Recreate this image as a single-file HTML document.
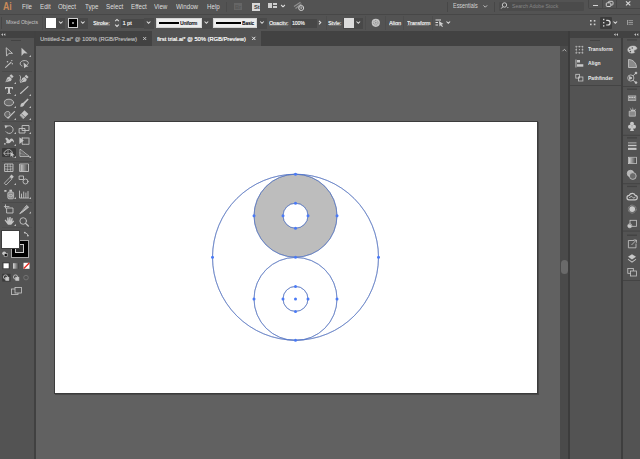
<!DOCTYPE html>
<html><head><meta charset="utf-8">
<style>
*{margin:0;padding:0;box-sizing:border-box}
html,body{width:640px;height:459px;overflow:hidden;background:#535353;font-family:"Liberation Sans",sans-serif;color:#ddd}
.a{position:absolute}
.t{position:absolute;white-space:nowrap;line-height:1;color:#d9d9d9}
.m{font-size:6.9px;top:4px;color:#dedede;transform:scaleX(0.9);transform-origin:0 0}
.c{font-size:5.6px;color:#e6e6e6;text-shadow:0.2px 0 0 #e6e6e6}
svg{position:absolute;overflow:visible}
</style></head><body>
<!-- menu bar -->
<div class="a" style="left:0;top:0;width:640px;height:14px;background:#535353"></div>
<div class="a" style="left:0;top:14px;width:640px;height:1px;background:#474747"></div>
<!-- control bar -->
<div class="a" style="left:0;top:15px;width:640px;height:16px;background:#535353"></div>
<!-- tab row -->
<div class="a" style="left:0;top:31px;width:640px;height:15px;background:#424242"></div>
<!-- toolbar -->
<div class="a" style="left:0;top:38px;width:34px;height:421px;background:#535353"></div>
<div class="a" style="left:34px;top:31px;width:2px;height:428px;background:#414141"></div>
<!-- canvas -->
<div class="a" style="left:36px;top:46px;width:524px;height:413px;background:#616161"></div>
<!-- active tab -->
<div class="a" style="left:152px;top:31px;width:109px;height:15px;background:#535353"></div>
<!-- artboard -->
<div class="a" style="left:54px;top:121px;width:484px;height:273px;background:#3c3c3c;box-shadow:0.5px 0.5px 0.5px #4a4a4a"></div><div class="a" style="left:55px;top:122px;width:482px;height:271px;background:#fff"></div>
<!-- scrollbar -->
<div class="a" style="left:560px;top:46px;width:8px;height:413px;background:#4a4a4a"></div>
<div class="a" style="left:568px;top:31px;width:1.5px;height:428px;background:#3c3c3c"></div>
<!-- right panels -->
<div class="a" style="left:569.5px;top:31px;width:70.5px;height:7px;background:#424242"></div>
<div class="a" style="left:569.5px;top:38px;width:51.5px;height:421px;background:#535353"></div>
<div class="a" style="left:621px;top:38px;width:1.5px;height:421px;background:#3e3e3e"></div>
<div class="a" style="left:623px;top:38px;width:17px;height:421px;background:#535353"></div>
<!-- menu -->
<div class="t" style="left:2.6px;top:0.9px;font-size:10.6px;font-weight:bold;color:#c88a5a;transform:scaleX(0.83);transform-origin:0 0">Ai</div>
<div class="t m" style="left:22.0px">File</div>
<div class="t m" style="left:39.7px">Edit</div>
<div class="t m" style="left:58.2px">Object</div>
<div class="t m" style="left:84.7px">Type</div>
<div class="t m" style="left:106.3px">Select</div>
<div class="t m" style="left:131.2px">Effect</div>
<div class="t m" style="left:154.3px">View</div>
<div class="t m" style="left:176.3px">Window</div>
<div class="t m" style="left:206.7px">Help</div>
<div class="a" style="left:226px;top:2px;width:1px;height:10px;background:#4b4b4b"></div>
<div class="a" style="left:233.7px;top:2.5px;width:8.4px;height:7.8px;background:#656565"></div>
<div class="a" style="left:252px;top:2.6px;width:8px;height:8px;background:#d8d8d8"></div>
<div class="t" style="left:253.5px;top:4.9px;font-size:5.8px;color:#3a3a3a;font-weight:bold;transform:rotate(0.01deg)">St</div><div class="t" style="left:235.2px;top:4.7px;font-size:5.6px;color:#565656;font-weight:bold;transform:rotate(0.01deg)">Br</div>
<div class="a" style="left:268px;top:3px;width:4px;height:5px;background:#cfcfcf"></div>
<div class="a" style="left:273px;top:3px;width:4px;height:2px;background:#cfcfcf"></div>
<div class="a" style="left:273px;top:6px;width:4px;height:2px;background:#cfcfcf"></div>
<svg style="left:0;top:0" width="640" height="15">
<path d="M281.1 5 L283 6.8 L284.9 5" stroke="#dcdcdc" stroke-width="1.1" fill="none"/>
<path d="M294 6.5 L300.5 2.2 M295.5 8.5 L301.5 3.8" stroke="#8e8e8e" stroke-width="1.3" fill="none"/>
<circle cx="301.2" cy="8" r="2.5" stroke="#cfcfcf" stroke-width="1" fill="#535353"/>
<path d="M301.2 6.3 V8.3 M300.2 7.6 L301.2 8.6 L302.2 7.6" stroke="#cfcfcf" stroke-width="0.8" fill="none"/>

</svg>
<div class="a" style="left:447px;top:2px;width:1px;height:10px;background:#474747"></div>
<div class="t m" style="left:453.4px;font-size:6.8px;top:3.2px;color:#d2d2d2;transform:scaleX(0.8);transform-origin:0 0">Essentials</div>
<svg style="left:0;top:0" width="640" height="15">
<path d="M483.5 5.4 L485.3 7.2 L487.1 5.4" stroke="#cfcfcf" stroke-width="0.9" fill="none"/>
</svg>
<div class="a" style="left:494px;top:2px;width:1px;height:10px;background:#474747"></div>
<div class="a" style="left:499px;top:1.5px;width:85px;height:9.5px;background:#4b4b4b;border-radius:1px"></div>
<svg style="left:0;top:0" width="640" height="15">
<circle cx="504.5" cy="5" r="2.2" stroke="#cfcfcf" stroke-width="0.9" fill="none"/>
<path d="M503 6.6 L501.2 8.6" stroke="#cfcfcf" stroke-width="1"/>
<path d="M506.8 7.2 L507.8 8.2 L508.8 7.2 Z" fill="#cfcfcf"/>
</svg>
<div class="t" style="left:511.8px;top:3.2px;font-size:6px;color:#858585;transform:scaleX(0.85);transform-origin:0 0">Search Adobe Stock</div>
<div class="a" style="left:588px;top:-2px;width:60px;height:10.5px;border:1px solid #474747;border-radius:1.5px"></div>
<div class="a" style="left:602px;top:0;width:1px;height:8px;background:#474747"></div>
<div class="a" style="left:616px;top:0;width:1px;height:8px;background:#474747"></div>
<div class="a" style="left:592.6px;top:4.6px;width:5.2px;height:1.3px;background:#d4d4d4"></div>
<svg style="left:0;top:0" width="640" height="15">
<rect x="608.5" y="1.3" width="4.5" height="3.7" rx="0.8" stroke="#d0d0d0" stroke-width="1" fill="none"/>
<rect x="606.3" y="2.8" width="4.5" height="3.7" rx="0.8" stroke="#d0d0d0" stroke-width="1" fill="#535353"/>
<path d="M626 1.4 L630.3 5.4 M630.3 1.4 L626 5.4" stroke="#d8d8d8" stroke-width="1.2"/>
</svg>
<!-- control bar -->
<div class="a" style="left:1px;top:17px;width:1px;height:12px;background:#474747"></div>
<div class="t c" style="left:5.6px;top:20.3px;font-size:5.5px;color:#c6c6c6;text-shadow:none;transform:scaleX(0.92);transform-origin:0 0">Mixed Objects</div>
<div class="a" style="left:42px;top:16px;width:1px;height:14px;background:#4d4d4d"></div>
<div class="a" style="left:45px;top:17.5px;width:20px;height:11px;background:#484848"></div>
<div class="a" style="left:46px;top:18px;width:10px;height:10px;background:#fff"></div>
<div class="a" style="left:67.5px;top:17.5px;width:20px;height:11px;background:#484848"></div>
<div class="a" style="left:68px;top:18px;width:10px;height:10px;background:#000;border:1px solid #cfcfcf"></div>
<div class="a" style="left:71px;top:21px;width:4px;height:4px;background:#8a8a8a;border:1px solid #000"></div>
<div class="t c" style="left:93.2px;top:20.7px;font-size:5.5px;transform:scaleX(0.96);transform-origin:0 0">Stroke:</div><div class="a" style="left:93.5px;top:25.4px;width:16px;height:0.5px;background:#6c6c6c"></div>
<div class="a" style="left:120.5px;top:18.5px;width:23px;height:9px;background:#474747"></div>
<div class="a" style="left:143.5px;top:17.5px;width:10px;height:11px;background:#4a4a4a"></div>
<div class="t c" style="left:122.5px;top:20.6px;font-size:5.5px">1 pt</div>
<div class="a" style="left:156px;top:17.5px;width:45.5px;height:10.5px;background:#ececec;border:1px solid #d4d4d4"></div>
<div class="a" style="left:159px;top:22px;width:20px;height:1.8px;background:#000"></div>
<div class="t c" style="left:179.8px;top:20.5px;font-size:5.3px;color:#141420;text-shadow:0.25px 0 0 #141420;transform:scaleX(0.92);transform-origin:0 0">Uniform</div>
<div class="a" style="left:201.5px;top:17.5px;width:10px;height:11px;background:#4a4a4a"></div>
<div class="a" style="left:213px;top:17.5px;width:44px;height:10.5px;background:#ececec;border:1px solid #d4d4d4"></div>
<div class="a" style="left:216px;top:21.9px;width:25px;height:2px;background:#000"></div>
<div class="t c" style="left:242.4px;top:20.5px;font-size:5.3px;color:#141420;text-shadow:0.25px 0 0 #141420;transform:scaleX(0.92);transform-origin:0 0">Basic</div>
<div class="a" style="left:257px;top:17.5px;width:10px;height:11px;background:#4a4a4a"></div>
<div class="t c" style="left:269px;top:20.7px;font-size:5.5px;transform:scaleX(0.96);transform-origin:0 0">Opacity:</div><div class="a" style="left:269.3px;top:25.4px;width:19px;height:0.5px;background:#6c6c6c"></div>
<div class="a" style="left:290.5px;top:18.5px;width:26px;height:9px;background:#474747"></div>
<div class="t c" style="left:291.6px;top:20.6px;font-size:5.4px;transform:scaleX(0.92);transform-origin:0 0">100%</div>
<div class="a" style="left:326px;top:16px;width:1px;height:14px;background:#4d4d4d"></div>
<div class="t c" style="left:328.2px;top:20.7px;font-size:5.5px;transform:scaleX(0.96);transform-origin:0 0">Style:</div><div class="a" style="left:328.5px;top:25.4px;width:12.5px;height:0.5px;background:#6c6c6c"></div>
<div class="a" style="left:343px;top:17.5px;width:20px;height:11px;background:#484848"></div>
<div class="a" style="left:344px;top:17.5px;width:10px;height:10.3px;background:#dcdcdc"></div>
<div class="a" style="left:365px;top:16px;width:1px;height:14px;background:#4d4d4d"></div>
<div class="a" style="left:384.5px;top:16px;width:1px;height:14px;background:#4d4d4d"></div>
<div class="t c" style="left:388.8px;top:20.7px;font-size:5.5px;transform:scaleX(0.98);transform-origin:0 0">Align</div><div class="a" style="left:389px;top:25.4px;width:11.5px;height:0.5px;background:#6c6c6c"></div>
<div class="a" style="left:403px;top:16px;width:1px;height:14px;background:#4d4d4d"></div>
<div class="t c" style="left:406.8px;top:20.7px;font-size:5.5px;transform:scaleX(0.94);transform-origin:0 0">Transform</div><div class="a" style="left:407px;top:25.4px;width:22.4px;height:0.5px;background:#6c6c6c"></div>
<div class="a" style="left:432px;top:16px;width:1px;height:14px;background:#4d4d4d"></div>
<div class="a" style="left:600px;top:16.5px;width:12px;height:12px;background:#3c3c3c;border-radius:1px"></div>
<svg style="left:0;top:0" width="640" height="32">
<g stroke="#dedede" stroke-width="1.05" fill="none">
<path d="M59 21.5 L60.8 23.3 L62.6 21.5"/>
<path d="M81 21.5 L82.8 23.3 L84.6 21.5"/>
<path d="M115.2 21.2 L117 19.4 L118.8 21.2 M115.2 24.6 L117 26.4 L118.8 24.6"/>
<path d="M146.8 21.5 L148.6 23.3 L150.4 21.5"/>
<path d="M204.6 21.5 L206.4 23.3 L208.2 21.5"/>
<path d="M260.2 21.5 L262 23.3 L263.8 21.5"/>
<path d="M319 20.8 L320.8 22.6 L319 24.4"/>
<path d="M356.5 21.5 L358.3 23.3 L360.1 21.5"/>
<path d="M446.5 21.5 L448.3 23.3 L450.1 21.5"/>
<path d="M613.5 21.5 L615.3 23.3 L617.1 21.5"/>
<circle cx="375.8" cy="22.8" r="4.1" fill="#c4c4c4" stroke="none"/>
<circle cx="375.8" cy="22.8" r="2.2" stroke="#777" stroke-width="0.7" stroke-dasharray="1 0.7"/>
<circle cx="375.8" cy="22.8" r="0.8" fill="#8a8a8a" stroke="none"/>
<path d="M435.5 20 H441 M435.5 22.5 H438 M435.5 25 H438"/>
<path d="M439 21 L443.5 24 L441.5 24.5 L443 26.5 L442 27 L440.8 25.2 L439.5 26.5 Z" fill="#cfcfcf" stroke="none"/>
<path d="M606.2 20.4 H607.8 A2.3 2.3 0 0 1 607.8 25 H606.2" stroke-width="1.2"/>
</g>
<g fill="#d0d0d0">
<rect x="590" y="20" width="1.6" height="1.6"/><rect x="593.8" y="20" width="1.6" height="1.6"/>
<rect x="590" y="23.6" width="1.6" height="1.6"/><rect x="593.8" y="23.6" width="1.6" height="1.6"/>
<rect x="603" y="18.8" width="1.4" height="1.4"/><rect x="603" y="22" width="1.4" height="1.4"/><rect x="603" y="25.2" width="1.4" height="1.4"/></g><g fill="#9c9c9c"><rect x="627" y="20" width="1" height="5"/><rect x="628.5" y="20.2" width="4.5" height="0.9"/>
<rect x="628.5" y="22" width="4.5" height="0.9"/><rect x="628.5" y="23.8" width="4.5" height="0.9"/>
</g>
</svg>
<!-- tabs -->
<svg style="left:0;top:0" width="640" height="46">
<g fill="#c8c8c8">
<path d="M1.2 34.6 L2.9 33.3 V35.9 Z M3.6 34.6 L5.3 33.3 V35.9 Z"/>
<path d="M613.9 34.6 L615.6 33.3 V35.9 Z M616.3 34.6 L618 33.3 V35.9 Z"/>
<path d="M634.2 34.6 L635.9 33.3 V35.9 Z M636.6 34.6 L638.3 33.3 V35.9 Z"/>
</g>
<g stroke="#cdcdcd" stroke-width="0.9">
<path d="M143.2 37 L146.2 40 M146.2 37 L143.2 40"/>
</g>
<g stroke="#e6e6e6" stroke-width="1">
<path d="M252.2 36.8 L255.4 40 M255.4 36.8 L252.2 40"/>
</g>
</svg>
<div class="a" style="left:11px;top:39.6px;width:10px;height:1.5px;background:#434343"></div>
<div class="t" style="left:39.6px;top:36.9px;font-size:5.9px;color:#b0b0b0;text-shadow:0.15px 0 0 #b0b0b0;transform:scaleX(0.98);transform-origin:0 0">Untitled-2.ai* @ 100% (RGB/Preview)</div>
<div class="t" style="left:156.7px;top:36.9px;font-size:5.9px;color:#f0f0f0;text-shadow:0.2px 0 0 #f0f0f0;transform:scaleX(0.975);transform-origin:0 0">first trial.ai* @ 50% (RGB/Preview)</div>
<!-- toolbar -->
<div class="a" style="left:2px;top:71px;width:30px;height:1px;background:#4a4a4a"></div>
<div class="a" style="left:2px;top:121px;width:30px;height:1px;background:#4a4a4a"></div>
<div class="a" style="left:2px;top:160.5px;width:30px;height:1px;background:#4a4a4a"></div>
<div class="a" style="left:2px;top:201.5px;width:30px;height:1px;background:#4a4a4a"></div>
<div class="a" style="left:2px;top:227px;width:30px;height:1px;background:#4e4e4e"></div>
<div class="a" style="left:2px;top:148px;width:14px;height:9px;background:#3a3a3a;border-radius:1px"></div>
<svg style="left:0;top:0" width="36" height="300">
<g fill="#bdbdbd">
<!-- corner triangles -->
<path d="M29 57 L31 55 V57 Z M14 84 L16 82 V84 Z M14 96 L16 94 V96 Z M29 96 L31 94 V96 Z M14 108 L16 106 V108 Z M29 108 L31 106 V108 Z M14 120 L16 118 V120 Z M29 120 L31 118 V120 Z M14 134 L16 132 V134 Z M29 134 L31 132 V134 Z M14 146 L16 144 V146 Z M14 158 L16 156 V158 Z M29 158 L31 156 V158 Z M14 185 L16 183 V185 Z M14 199 L16 197 V199 Z M29 199 L31 197 V199 Z M29 213.5 L31 211.5 V213.5 Z M14 226 L16 224 V226 Z"/>
</g>
<g fill="none" stroke="#c4c4c4" stroke-width="0.9" stroke-linejoin="round" stroke-linecap="round">
<!-- selection outline -->
<path d="M6.5 48 L12.5 53.4 L9 53.3 L6.8 55.8 Z"/>
<!-- wand -->
<path d="M5.6 67.3 L11 62.4" stroke-width="1.1"/>
<!-- lasso -->
<path d="M22 66 C19 65 19.5 61 24 60.6 C28.5 60.3 29.5 63.6 27 65"/>
<!-- curvature line -->
<path d="M20 75.5 C22 77 19 80 20.5 82.5"/>
<!-- line -->
<path d="M20.5 93.5 L28 86.6" stroke-width="1.1"/>
<!-- ellipse -->
<ellipse cx="9" cy="102.5" rx="4.6" ry="3.3" fill="#6a6a6a"/>
<!-- shaper -->
<path d="M9 117.8 C4 118 3 112 7.5 111.5 C9.5 111.3 10.5 113 9.8 114.5" fill="#686868"/>
<path d="M8 118 L14.5 111.6" stroke-width="1.3"/>
<!-- rotate -->
<path d="M6.4 126.9 A3.9 3.9 0 1 1 6 131.8"/>
<!-- scale -->
<rect x="19.5" y="128.5" width="5.5" height="4.5"/>
<rect x="22.5" y="125.5" width="6.5" height="5"/>
<!-- free transform -->
<rect x="22.2" y="138" width="6.8" height="6.3" stroke-dasharray="1 0.7"/>
<!-- shape builder -->
<path d="M6.3 155.5 C3.3 155.5 3.3 151.2 6 151 C6.5 149 10.5 148.8 11 151 C13 151.3 12.8 154.5 11 155" stroke-width="0.8"/>
<path d="M4 153.4 H10.5 M8 150.5 V155.5" stroke-width="0.6"/>
<!-- perspective -->
<path d="M20 149.5 L20 156.5 L29 156.5 Z M20 153 L24.5 154.8"/>
<!-- mesh -->
<rect x="5" y="164" width="8" height="7.5"/>
<!-- gradient -->
<rect x="20" y="164" width="8.5" height="7.5"/>
<!-- blend -->
<rect x="19.5" y="176" width="4" height="3.5"/>
<circle cx="25.5" cy="181.5" r="2.5"/>
<!-- graph -->
<path d="M19.5 191 V198 H28.5 M21.5 197.5 V194 M23.7 197.5 V192 M25.9 197.5 V193 M28 197.5 V191.5"/>
<!-- artboard -->
<path d="M5.5 204.8 V208 M4.3 206.6 H9 M7 208 H13 V213 H7 Z"/>
<!-- slice -->
<path d="M20 213.4 L26.6 205.4 L28.6 207.2 L22.6 212 Z" fill="#b8b8b8"/><path d="M22 210.5 L26.8 206.6" stroke="#6a6a6a" stroke-width="0.5"/>
<!-- zoom -->
<circle cx="23.2" cy="221" r="3.3"/>
<path d="M25.6 223.4 L28.3 226" stroke-width="1.3"/>
</g>
<g fill="#c4c4c4">
<!-- direct selection filled -->
<path d="M21.5 47.8 L27.6 53.5 L24 53.2 L21.5 56 Z"/>
<circle cx="7.5" cy="61.7" r="0.8"/><circle cx="11.8" cy="60.6" r="0.7"/><circle cx="12.3" cy="63.8" r="0.7"/>
<path d="M23.5 62.5 L28.5 66.5 L26.2 66.7 L24.2 68.2 Z"/>
<!-- pen -->
<path d="M5.3 82.3 L7.3 77.5 L9.5 76.6 L11.8 78.9 L10.9 81 Z"/>
<path d="M9.6 75.8 L11.2 74.2 L13.6 76.6 L12 78.2 Z"/>
<path d="M20.3 82.8 L22.3 78 L24.5 77.1 L26.8 79.4 L25.9 81.5 Z"/>
<path d="M24.6 76.3 L26.2 74.7 L28.6 77.1 L27 78.7 Z"/>
</g><g stroke="#535353" stroke-width="0.6"><path d="M5.8 81.8 L8.6 79"/><path d="M20.8 82.3 L23.6 79.5"/></g><g fill="#c4c4c4">
<!-- T -->
<path d="M5 87 H13 V89.2 H12.2 L11.8 88.3 H10 V93 H11 V93.8 H7 V93 H8 V88.3 H6.2 L5.8 89.2 H5 Z"/>
<!-- brush -->
<path d="M20.3 106.8 C20.3 104.2 21.5 103 23.2 102.8 L27.6 98.5 L28.7 99.6 L24.5 104 C24.3 106 22.5 107 20.3 106.8 Z"/>
<!-- eraser -->
<path d="M24.5 110.2 L28.4 114 L23.2 118.9 L19.6 115.2 Z"/>
</g><g stroke="#535353" stroke-width="0.7" fill="none"><path d="M21.3 113.6 L24.9 117.2"/><path d="M20.6 115.3 L23.1 117.8" stroke="#8a8a8a" stroke-width="0.9"/></g><g fill="#c4c4c4">
<!-- puppet -->
<path d="M5.4 138.9 C5.6 137.6 7.2 137.4 7.8 138.6 L9.4 140.2 C9.8 139.2 10.6 138.4 11.4 138.6 C12.9 138.8 14 140.2 13.9 142.3 L13.2 142.2 C12.9 141.1 12.2 140.6 11.3 141.4 C10.2 142.8 8.6 143.6 7 143.2 L6 142.4 C6.8 141.6 6.8 140.6 6.2 140 Z"/><circle cx="4.9" cy="143.8" r="0.9"/>
<path d="M10.5 151.8 L14.6 155.2 L12.6 155.4 L13.6 157.3 L12.9 157.6 L11.9 155.8 L10.5 157 Z"/>
<path d="M4.6 125.2 L8 125.6 L5.2 128.6 Z"/>
<!-- free transform arrow -->
<path d="M19.4 137.3 L23.8 140.6 L19.4 143.9 Z"/>
<!-- eyedropper -->
</g><g fill="none" stroke="#c4c4c4" stroke-width="0.8"><path d="M4.3 183.2 L10 177.3 L11.8 179.1 L6.1 185 Z"/></g><g fill="#c4c4c4">
<path d="M9.6 176.4 L11.6 174.6 L13.8 176.8 L12 178.8 Z"/>
<!-- symbol sprayer -->
<rect x="7.8" y="192" width="5.8" height="6.8" rx="1.3" fill="#8c8c8c" stroke="#c4c4c4" stroke-width="0.8"/>
<rect x="9.4" y="189.7" width="2.6" height="2"/>
<rect x="4.3" y="190" width="2.2" height="1.8"/>
<ellipse cx="10.7" cy="195.6" rx="1.9" ry="1.2" fill="none" stroke="#d0d0d0" stroke-width="0.6"/>
<!-- hand -->
<path d="M4.6 220.2 L5.4 219.5 L7.3 221.6 L7.1 217.6 L8.4 217.4 L8.9 220.8 L9.4 216.9 L10.7 217.1 L10.7 220.9 L11.6 217.9 L12.8 218.3 L12.3 221.8 L13.4 220.6 L14.2 221.2 L11.2 224.8 L8 224.8 Z"/>
</g>
<!-- mesh grid -->
<g stroke="#c4c4c4" stroke-width="0.6" fill="none">
<path d="M5 166.5 Q9 165.5 13 167 M5 169 Q9 170 13 168.8 M7.5 164 Q8 168 7.3 171.5 M10.3 164 Q10 168 10.8 171.5"/>
</g>
<!-- gradient fill -->
<defs><linearGradient id="gr" x1="0" x2="1"><stop offset="0" stop-color="#c8c8c8"/><stop offset="1" stop-color="#4a4a4a"/></linearGradient>
<linearGradient id="gr2" x1="0" x2="1"><stop offset="0" stop-color="#d8d8d8"/><stop offset="1" stop-color="#3a3a3a"/></linearGradient></defs>
<rect x="20.5" y="164.5" width="7.5" height="6.5" fill="url(#gr)"/>
<path d="M20.5 149.8 L20.5 156.3 L28.5 156.3 Z" fill="#6e6e6e" opacity="0.8"/>
</svg>
<!-- fill / stroke -->
<div class="a" style="left:11px;top:240px;width:17.5px;height:17.5px;background:#000;border:1px solid #a8a8a8"></div>
<div class="a" style="left:15px;top:244.2px;width:9.3px;height:9.3px;border:1px solid #cfcfcf;background:#2c2c2c"></div>
<div class="a" style="left:1px;top:230px;width:19.4px;height:19px;background:#fff;border:1px solid #3e3e3e"></div>
<svg style="left:0;top:0" width="36" height="300">
<g fill="none" stroke="#c8c8c8" stroke-width="0.8">
<path d="M25.2 233 Q27.6 233.3 27.8 235.2"/>
</g>
<g fill="#c8c8c8">
<circle cx="24.8" cy="232.6" r="0.9"/><circle cx="27.9" cy="235.6" r="0.9"/>
<circle cx="4.2" cy="253.3" r="1.9"/>
</g>
<rect x="4.2" y="253.6" width="3" height="3" fill="#111" stroke="#c8c8c8" stroke-width="0.6"/>
<!-- color mode row -->
<rect x="2.3" y="262.3" width="7.5" height="7" fill="#3c3c3c"/>
<rect x="3.5" y="263.3" width="5.2" height="5" fill="#fff"/>
<rect x="13" y="263.2" width="6" height="5.5" fill="url(#gr2)"/>
<rect x="23.5" y="262.8" width="6" height="6" fill="#fff"/>
<path d="M23.8 268.5 L29.3 263" stroke="#e8261c" stroke-width="1.3"/>
<!-- draw modes -->
<rect x="2.3" y="273.8" width="8.3" height="7.8" fill="#3a3a3a"/>
<g fill="none" stroke="#c8c8c8" stroke-width="0.8">
<circle cx="5.5" cy="277" r="2.1"/><rect x="5.8" y="277.3" width="3" height="3" fill="#c8c8c8"/>
<circle cx="15.5" cy="277" r="2.1"/><rect x="15.8" y="277.3" width="3" height="3" fill="#c8c8c8"/>
<circle cx="26" cy="277.6" r="2.3" stroke="#7a7a7a"/>
<rect x="11.5" y="289" width="6.5" height="5.5"/>
<rect x="15" y="287.5" width="6.5" height="5.5" fill="#535353"/>
</g>
</svg>
<!-- scrollbar -->
<svg style="left:0;top:0" width="640" height="459">
<path d="M562.5 51.2 L564.4 49.3 L566.3 51.2" stroke="#bdbdbd" stroke-width="0.9" fill="none"/>
</svg>
<div class="a" style="left:560.5px;top:259.5px;width:7.3px;height:14px;background:#6a6a6a;border-radius:3.5px"></div>
<!-- panel 1 -->
<div class="a" style="left:590px;top:39.5px;width:10px;height:1.3px;background:#434343"></div>
<div class="a" style="left:570px;top:85px;width:51px;height:1px;background:#444"></div>
<div class="t" style="left:587.8px;top:47.1px;font-size:5.6px;font-weight:bold;color:#e8e8e8;transform:scaleX(0.9);transform-origin:0 0">Transform</div>
<div class="t" style="left:587.8px;top:61.2px;font-size:5.6px;font-weight:bold;color:#e8e8e8;transform:scaleX(0.9);transform-origin:0 0">Align</div>
<div class="t" style="left:587.8px;top:75.5px;font-size:5.6px;font-weight:bold;color:#e8e8e8;transform:scaleX(0.9);transform-origin:0 0">Pathfinder</div>
<svg style="left:0;top:0" width="640" height="459">
<g fill="#c8c8c8">
<rect x="575.6" y="45.9" width="1.4" height="1.4"/><rect x="578.7" y="45.9" width="1.4" height="1.4"/><rect x="581.8" y="45.9" width="1.4" height="1.4"/>
<rect x="575.6" y="49" width="1.4" height="1.4"/><rect x="578.9" y="49.2" width="1" height="1"/><rect x="581.8" y="49" width="1.4" height="1.4"/>
<rect x="575.6" y="52.1" width="1.4" height="1.4"/><rect x="578.7" y="52.1" width="1.4" height="1.4"/><rect x="581.8" y="52.1" width="1.4" height="1.4"/>
</g><g stroke="#9a9a9a" stroke-width="0.5" fill="none"><rect x="576.3" y="46.6" width="6.2" height="6.2"/></g><g fill="#c8c8c8">
<rect x="575.5" y="59.5" width="0.9" height="8"/>
<rect x="577" y="60" width="3" height="2.5"/>
<rect x="577" y="64.2" width="6.3" height="2.5"/>
</g>
<g fill="none" stroke="#c8c8c8" stroke-width="0.8">
<rect x="575.8" y="74.3" width="3.8" height="3.8"/>
<rect x="578.6" y="77" width="4.3" height="4"/>
</g>
<!-- grips icon strip -->
<g fill="#434343">
<rect x="627" y="39.3" width="10" height="1.3"/>
<rect x="627" y="88.6" width="10" height="1.3"/>
<rect x="627" y="137.2" width="10" height="1.3"/>
<rect x="627" y="185.8" width="10" height="1.3"/>
<rect x="627" y="234.6" width="10" height="1.3"/>
</g>
<g fill="#444">
<rect x="623" y="86" width="17" height="1"/>
<rect x="623" y="134.8" width="17" height="1"/>
<rect x="623" y="183.2" width="17" height="1"/>
<rect x="623" y="230.6" width="17" height="1"/>
<rect x="623" y="280" width="17" height="1"/>
</g>
<!-- icons -->
<g fill="none" stroke="#c8c8c8" stroke-width="0.8">
<!-- color palette -->
<path d="M627.8 50.3 C627.5 46.8 632 45.4 635 46.3 C637.6 47.2 637.3 49.6 635.2 49.8 C633.6 50 633.4 51.4 634.6 52.3 C633.2 53.8 628.3 53.6 627.8 50.3 Z" fill="#c8c8c8" stroke-width="0.5"/><circle cx="629.8" cy="49.3" r="0.8" fill="#535353" stroke="none"/><circle cx="632.3" cy="48" r="0.8" fill="#535353" stroke="none"/><circle cx="630.4" cy="51.6" r="0.8" fill="#535353" stroke="none"/>
<!-- gradient quarter -->
<path d="M628.5 59.5 C633 59.5 636.5 63 636.5 67.5 H628.5 Z" fill="#8a8a8a"/>
<!-- transform/symbol -->
<circle cx="630.8" cy="78" r="3.1"/>
<path d="M633 75.8 L636 73 M633 80.2 L636 82.6"/>
<path d="M629.5 76.5 L632 78 L629.5 79.5 Z" fill="#c8c8c8"/>
<circle cx="636" cy="73" r="0.9" fill="#c8c8c8"/><circle cx="636" cy="82.6" r="0.9" fill="#c8c8c8"/>
<!-- stroke lines -->
<!-- gradient box -->
<rect x="628.5" y="157.3" width="8" height="6.3"/>
<!-- transparency -->
<circle cx="630.5" cy="173.5" r="3.2" fill="#b8b8b8"/>
<circle cx="632.8" cy="176" r="3.4" fill="#6c6c6c"/>
<!-- CC libraries -->
<path d="M629 199.9 C626.2 199.6 626.3 195.2 629.3 195.3 C630.2 192.8 634.6 192.6 635.2 195.4 C638.2 195.8 637.8 199.9 635 199.9 Z" stroke-width="1.2"/>
<path d="M629.3 198 C630.6 195.8 632.2 196.2 632.6 197.2 C633.1 198.4 634.6 198.4 635.2 196.8" stroke-width="0.9"/>
<!-- asset export -->
<rect x="630" y="220.3" width="6.5" height="6"/><circle cx="629.8" cy="225.8" r="2" fill="#535353"/>
<!-- export -->
<path d="M634 240.5 H628.4 V247.8 H636 V243.5 M631.5 245 L636.4 240 M633.6 240 H636.4 V242.8"/>
<!-- artboards -->
<rect x="627.8" y="268.5" width="5.5" height="4.8"/>
<rect x="630.5" y="271" width="6" height="5" fill="#535353"/>
</g>
<g fill="#c8c8c8">
<!-- swatches -->
<rect x="628.3" y="95.9" width="7.5" height="4.5" fill="#5e5e5e" stroke="#c8c8c8" stroke-width="0.7"/><rect x="629" y="96.6" width="1.8" height="1.5"/><rect x="631.2" y="96.6" width="1.8" height="1.5"/><rect x="633.4" y="96.6" width="1.8" height="1.5"/><rect x="629" y="98.5" width="6.2" height="1.3" fill="#9a9a9a"/>
<!-- brushes -->
<path d="M629.2 111.2 H635.4 V116.2 H629.2 Z" fill="#8a8a8a" stroke="#c8c8c8" stroke-width="0.7"/><path d="M631.3 111 L629.6 107.4 L632.3 110.6 L632.8 107 L633.6 110.6 L636.2 108.6 L634.8 111 Z"/>
<!-- club -->
<circle cx="632" cy="123.8" r="2"/><circle cx="630" cy="126.8" r="2"/><circle cx="634" cy="126.8" r="2"/>
<path d="M631.5 127 L630 131 H634 L632.5 127 Z"/>
<!-- stroke lines -->
<rect x="628" y="142.5" width="8.5" height="0.8"/>
<rect x="628" y="144.8" width="8.5" height="1.4"/>
<rect x="628" y="147.8" width="8.5" height="2.1"/>
<!-- appearance sun -->
<circle cx="632.2" cy="209.1" r="2.9"/><circle cx="632.2" cy="209.1" r="3.9" fill="none" stroke="#b0b0b0" stroke-width="0.9" stroke-dasharray="0.7 0.6"/>
<!-- layers -->
<path d="M632 254.2 L636 256.8 L632 259.4 L628 256.8 Z"/>
<path d="M628.3 259 L632 261.5 L635.7 259 L636.3 259.6 L632 262.7 L627.7 259.6 Z"/>
<circle cx="629.5" cy="226" r="1.8"/>
</g>
<g fill="#575757">

</g>
<defs><linearGradient id="gr3" x1="0" x2="1"><stop offset="0" stop-color="#cfcfcf"/><stop offset="1" stop-color="#444"/></linearGradient></defs>
<rect x="629" y="157.8" width="7" height="5.3" fill="url(#gr3)"/>
</svg>
<!-- artwork -->
<svg style="left:0;top:0" width="640" height="459">
<path fill="#bdbdbd" fill-rule="evenodd" d="M295.5 174.2 A41.5 41.5 0 1 1 295.5 257.2 A41.5 41.5 0 1 1 295.5 174.2 Z M295.5 203.2 A12.5 12.5 0 1 0 295.5 228.2 A12.5 12.5 0 1 0 295.5 203.2 Z"/>
<g fill="none">
<circle cx="295.5" cy="257.2" r="83" stroke="#2a3c6c" stroke-width="0.55"/>
<circle cx="295.5" cy="215.7" r="41.5" stroke="#2a3c6c" stroke-width="0.55"/>
<circle cx="295.5" cy="215.7" r="12.5" stroke="#2a3c6c" stroke-width="0.55"/>
<circle cx="295.5" cy="298.9" r="41.5" stroke="#2a3c6c" stroke-width="0.55"/>
<circle cx="295.5" cy="298.9" r="12.5" stroke="#2a3c6c" stroke-width="0.55"/>
<g stroke="#5383f4" stroke-width="0.55" opacity="0.85">
<circle cx="295.5" cy="257.2" r="83"/>
<circle cx="295.5" cy="215.7" r="41.5"/>
<circle cx="295.5" cy="215.7" r="12.5"/>
<circle cx="295.5" cy="298.9" r="41.5"/>
<circle cx="295.5" cy="298.9" r="12.5"/>
</g>
</g>
<g fill="#4a7af6">
<circle cx="295.5" cy="174.2" r="1.5"/><circle cx="212.5" cy="257.2" r="1.5"/><circle cx="378.5" cy="257.2" r="1.5"/><circle cx="295.5" cy="340.2" r="1.5"/>
<circle cx="254" cy="215.7" r="1.5"/><circle cx="337" cy="215.7" r="1.5"/><circle cx="295.5" cy="257.2" r="1.5"/>
<circle cx="283" cy="215.7" r="1.5"/><circle cx="308" cy="215.7" r="1.5"/><circle cx="295.5" cy="203.2" r="1.5"/><circle cx="295.5" cy="228.2" r="1.5"/>
<circle cx="254" cy="298.9" r="1.5"/><circle cx="337" cy="298.9" r="1.5"/>
<circle cx="283" cy="298.9" r="1.5"/><circle cx="308" cy="298.9" r="1.5"/><circle cx="295.5" cy="286.4" r="1.5"/><circle cx="295.5" cy="311.4" r="1.5"/>
<circle cx="295.5" cy="298.9" r="1.5"/>
</g>
</svg>
</body></html>
